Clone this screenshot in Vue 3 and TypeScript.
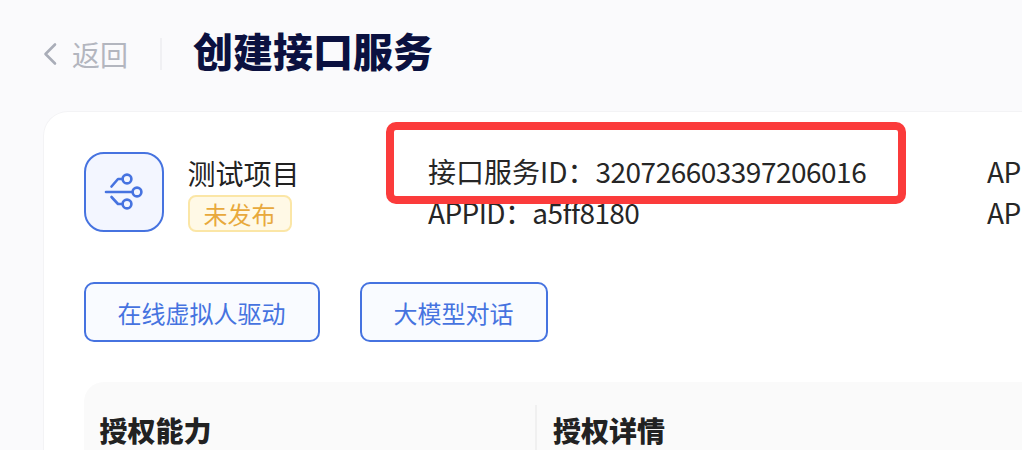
<script setup lang="ts">
interface Row {
  label: string
  value: string
  kind: string
}
const infoLeft: Row[] = [
  { label: '接口服务ID：', value: '320726603397206016', kind: 'service' },
  { label: 'APPID：', value: 'a5ff8180', kind: 'app' },
]
const infoRight: string[] = ['APIKey', 'APISecret']
const tags: string[] = ['在线虚拟人驱动', '大模型对话']
</script>

<template>
  <div class="page">
    <header class="head">
      <div class="back">
        <svg class="chev" width="14" height="24" viewBox="0 0 14 24" fill="none">
          <path d="M12 2.5 2.5 12 12 21.5" stroke="#a9adb8" stroke-width="2.6" stroke-linecap="round" stroke-linejoin="round" />
        </svg>
        <span>返回</span>
      </div>
      <i class="sep"></i>
      <h1>创建接口服务</h1>
    </header>

    <section class="card">
      <div class="top">
        <div class="project">
          <div class="logo">
            <svg width="40" height="40" viewBox="0 0 40 40" fill="none" stroke="#4673e0" stroke-width="2.6" stroke-linecap="round" stroke-linejoin="round">
              <path d="M2 20H28" />
              <circle cx="33" cy="20" r="4.4" />
              <circle cx="23" cy="7" r="4.4" />
              <circle cx="23" cy="32" r="4.4" />
              <path d="M18.6 7H14L7.5 14.5" />
              <path d="M18.6 32H14L7.5 25" />
            </svg>
          </div>
          <div class="meta">
            <div class="name">测试项目</div>
            <span class="badge">未发布</span>
          </div>
        </div>
        <div class="info left">
          <div v-for="r in infoLeft" :key="r.label" :class="r.kind"><span class="label">{{ r.label }}</span><span class="value">{{ r.value }}</span></div>
        </div>
        <div class="info right">
          <div v-for="t in infoRight" :key="t">{{ t }}</div>
        </div>
        <div class="mark"></div>
      </div>

      <div class="tags">
        <button v-for="t in tags" :key="t" class="tag">{{ t }}</button>
      </div>

      <div class="table">
        <div class="th first">授权能力</div>
        <div class="th second">授权详情</div>
      </div>
    </section>
  </div>
</template>

<style>
html, body { margin: 0; background: #fafafc; overflow: hidden; }
</style>

<style scoped>
.page {
  width: 1022px;
  height: 450px;
  overflow: hidden;
  box-sizing: border-box;
  padding: 24px 0 0 44px;
  background: #fafafc;
  font-family: "Noto Sans CJK SC", sans-serif;
}
.head {
  display: flex;
  align-items: center;
  height: 52px;
}
.back {
  display: flex;
  align-items: center;
  gap: 15px;
  width: 116px;
  font-size: 28px;
  color: #b3b6bf;
  padding-top: 8px;
  box-sizing: border-box;
}
.chev { flex: none; margin-left: -1px; }
.sep {
  width: 2px;
  height: 32px;
  margin-top: 8px;
  background: #f0f0f3;
}
h1 {
  margin: 0 0 0 31px;
  font-size: 40px;
  line-height: 52px;
  font-weight: 900;
  color: #0b1140;
}
.card {
  position: relative;
  width: 1100px;
  height: 420px;
  margin-top: 36px;
  padding: 40px 0 0 40px;
  box-sizing: border-box;
  background: #fff;
  border-radius: 24px;
  box-shadow: 0 0 0 1px #f3f3f5;
}
.top {
  display: flex;
  height: 80px;
}
.project {
  display: flex;
  gap: 24px;
  width: 344px;
}
.logo {
  width: 80px;
  height: 80px;
  box-sizing: border-box;
  display: flex;
  align-items: center;
  justify-content: center;
  background: #f3f6ff;
  border: 2px solid #4673e0;
  border-radius: 20px;
}
.meta { display: flex; flex-direction: column; align-items: flex-start; }
.name {
  margin-left: -0.5px;
  font-size: 28px;
  line-height: 42px;
  color: #222;
}
.badge {
  margin-top: 1px;
  width: 104px;
  height: 37px;
  padding-right: 1px;
  box-sizing: border-box;
  text-align: center;
  font-size: 24px;
  line-height: 33px;
  color: #e8a93c;
  background: #fff9e6;
  border: 2px solid #fbe6a6;
  border-radius: 8px;
}
.info {
  margin-top: -1px;
  font-size: 28px;
  line-height: 41px;
  color: #262626;
  white-space: nowrap;
  letter-spacing: -0.6px;
}
.service .label { letter-spacing: 0; }
.service .value { letter-spacing: -0.5px; }
.left { width: 559px; }
.mark {
  position: absolute;
  left: 342px;
  top: 10px;
  width: 520px;
  height: 82px;
  box-sizing: border-box;
  border: 8px solid #fb3b3b;
  border-radius: 10px;
}
.tags {
  display: flex;
  gap: 40px;
  margin-top: 50px;
}
.tag {
  height: 60px;
  padding: 0 32.5px 0 31.5px;
  box-sizing: border-box;
  font-family: inherit;
  font-size: 24px;
  color: #4673e0;
  background: #f9fbff;
  border: 2px solid #4673e0;
  border-radius: 10px;
}
.table {
  display: flex;
  height: 120px;
  margin-top: 40px;
  background: #fafafa;
  border-radius: 20px;
  padding-top: 23px;
  box-sizing: border-box;
}
.th {
  font-size: 28px;
  line-height: 50px;
  font-weight: 900;
  color: #222;
}
.first { box-sizing: border-box; width: 451px; padding-left: 15.5px; }
.second { padding-left: 16px; border-left: 2px solid #f0f0f0; }
</style>
